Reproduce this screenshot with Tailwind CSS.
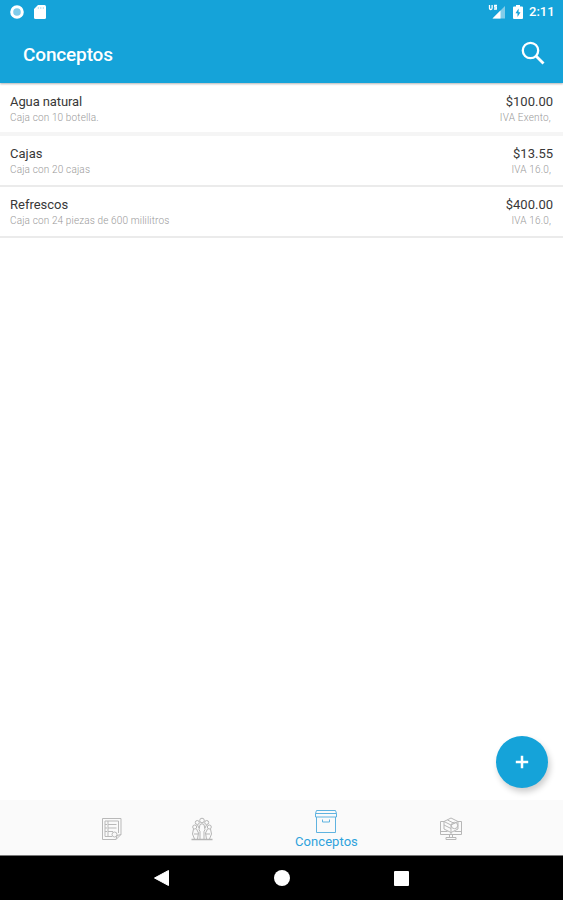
<!DOCTYPE html>
<html lang="es">
<head>
<meta charset="utf-8">
<title>Conceptos</title>
<script src="https://cdn.jsdelivr.net/npm/@tailwindcss/browser@4"></script>
</head>
<body class="bg-white">
<div class="relative flex h-[900px] w-[563px] flex-col overflow-hidden bg-white font-[Roboto,sans-serif]">
  <header class="z-10 flex h-[83px] shrink-0 flex-col bg-[#15a3d9] text-white shadow-[0_1px_2px_rgba(0,0,0,0.3)]">
    <div class="flex h-6 items-center justify-between pl-[10px] pr-[8px]">
      <div class="flex items-center gap-[10px]">
        <svg class="h-[14px] w-[14px]" viewBox="0 0 14 14"><circle cx="7" cy="7" r="5.300" fill="#7fcbea" stroke="#fff" stroke-width="3"/></svg>
        <svg class="h-[14px] w-[12px]" viewBox="0 0 12 14"><path d="M4 0h6.500Q12 0 12 1.500v11q0 1.500-1.500 1.500h-9Q0 14 0 12.500V4z" fill="#fff"/><path d="M4.300 2v2M6.800 2v2M9.300 2v2" stroke="#b5e0f1"/></svg>
      </div>
      <div class="flex items-center">
        <svg class="h-[16px] w-[18px]" viewBox="0 0 18 16"><path d="M17 2v12.500H4.500z" fill="#83cde9"/><path d="M12.500 6.500v8h-8z" fill="#fff"/><path d="M1.500 1v3q0 1.500 1.300 1.500T4.100 4V1M9 1.500H6.700v1.700h1.600V5H6" fill="none" stroke="#fff" stroke-width="1.300"/></svg>
        <svg class="ml-[7px] h-[14px] w-[10px]" viewBox="0 0 10 14"><path d="M3 0h4v1.500h2q1 0 1 1V13q0 1-1 1H1q-1 0-1-1V2.500q0-1 1-1h2z" fill="#fff"/><path d="M5.600 3.500 2.500 8.200h2V12l3-4.800h-1.900z" fill="#15a3d9"/></svg>
        <span class="ml-[6px] w-[26px] text-[13px] font-medium leading-6 whitespace-nowrap">2:11</span>
      </div>
    </div>
    <div class="flex h-[59px] items-center justify-between pl-[23px] pr-[18px]">
      <h1 class="pt-[2px] text-[19px] font-medium leading-6 tracking-[-0.15px]">Conceptos</h1>
      <svg class="mb-[2px] h-6 w-6" viewBox="0 0 24 24" fill="none" stroke="#fff" stroke-width="2.300"><circle cx="9.500" cy="9.500" r="7.700"/><path d="m15 15 7.500 7.500" stroke-width="2.800"/></svg>
    </div>
  </header>

  <main class="min-h-0 flex-1">
    <ul class="text-[#383838]">
      <li class="flex h-[53px] justify-between border-b-[4px] border-[#f5f5f5] px-[10px] pt-[11px]">
        <div><p class="text-[13px] leading-4 tracking-[-0.1px]">Agua natural</p><p class="text-[10px] font-light leading-4 tracking-[0.14px] text-[#999]">Caja con 10 botella.</p></div>
        <div class="text-right"><p class="text-[13px] leading-4">$100.00</p><p class="pr-[2px] text-[10px] font-light leading-4 tracking-[0.2px] text-[#999]">IVA Exento,</p></div>
      </li>
      <li class="flex h-[51px] justify-between border-b-2 border-[#ebebeb] px-[10px] pt-[10px]">
        <div><p class="text-[13px] leading-4">Cajas</p><p class="text-[10px] font-light leading-4 tracking-[0.16px] text-[#999]">Caja con 20 cajas</p></div>
        <div class="text-right"><p class="text-[13px] leading-4">$13.55</p><p class="pr-[2px] text-[10px] font-light leading-4 tracking-[0.15px] text-[#999]">IVA 16.0,</p></div>
      </li>
      <li class="flex h-[51px] justify-between border-b-2 border-[#ebebeb] px-[10px] pt-[10px]">
        <div><p class="text-[13px] leading-4">Refrescos</p><p class="text-[10px] font-light leading-4 tracking-[0.14px] text-[#999]">Caja con 24 piezas de 600 mililitros</p></div>
        <div class="text-right"><p class="text-[13px] leading-4">$400.00</p><p class="pr-[2px] text-[10px] font-light leading-4 tracking-[0.15px] text-[#999]">IVA 16.0,</p></div>
      </li>
    </ul>
  </main>

  <button aria-label="Agregar" class="absolute bottom-[112px] right-[15px] flex h-[52px] w-[52px] items-center justify-center rounded-full bg-[#15a3d9] shadow-[2px_4px_6px_rgba(0,0,0,0.2)]">
    <svg class="h-[14px] w-[14px]" viewBox="0 0 14 14" stroke="#fff" stroke-width="2.500"><path d="M7 .8v12.400M.8 7h12.400"/></svg>
  </button>

  <nav class="flex h-[56px] shrink-0 items-center border-b border-[#777] bg-[#fafafa] px-[67px]">
    <div class="flex w-[90px] justify-center pt-[2px]">
      <svg class="h-[24px] w-[22px]" viewBox="0 0 22 24" fill="none" stroke="#b9b9b9" stroke-width="1"><path d="M1.500 1.500h18.500v16l-5 5H1.500zM4 4h13.500v12M4 4v15.500h7M7 4v15.500M7 7.500h8.500M7 11h8.500M7 14.500h5M4 7.500h2M4 11h2M4 14.500h2M20 17.500l-4 1-1 4"/><circle cx="13.500" cy="17.500" r="2.500"/></svg>
    </div>
    <div class="flex w-[90px] justify-center pt-[2px]">
      <svg class="h-[24px] w-[24px]" viewBox="0 0 24 24" fill="none" stroke="#b5b5b5" stroke-width="1"><circle cx="12" cy="3.500" r="2.300"/><circle cx="7.300" cy="5.500" r="2"/><circle cx="16.700" cy="5.500" r="2"/><circle cx="4.700" cy="10" r="2"/><circle cx="19.300" cy="10" r="2"/><path d="M10 7.500q2-1.500 4 0l1 5-1 2v7.500M10 7.500l-1 5 1 2v7.500M3.500 12l-1 5 2 5M6.500 12l2 4-1 6M20.500 12l1 5-2 5M17.500 12l-2 4 1 6M4 17h4M16 17h4M7.500 8l1.500 3M16.500 8 15 11"/><path d="M1.500 22.500h21" stroke-width="1.500"/></svg>
    </div>
    <div class="flex w-[158px] flex-col items-center pt-[2px] text-[#2ea2dc]">
      <svg class="h-[25px] w-[24px]" viewBox="0 0 24 25" fill="none" stroke="#5fb3e0" stroke-width="1"><path d="M2.500 1.500h19l1 3v3.500h-21V4.500zM2.500 8v15.500h19V8M1.500 4.500h21M8.500 10.500v2.500h7v-2.500"/></svg>
      <span class="mt-px pl-px text-[13px] leading-[14px] tracking-[0.05px]">Conceptos</span>
    </div>
    <div class="flex w-[91px] justify-center pt-[2px]">
      <svg class="h-[24px] w-[24px]" viewBox="0 0 24 24" fill="none" stroke="#b7b7b7" stroke-width="1"><path d="M5 4.500H1.500v13h21v-13H19M1.500 14.500h7M15.500 14.500h7M10.500 17.500v3M13.500 17.500v3M7 20.500h10v2H7zM5 4.500 12 1l7 3.500v7.500L12 15.500 5 12zM5 4.500 12 8l7-3.500M12 8v9.500M8.500 3l7 3.500M5 8l7 3.500"/><circle cx="15.500" cy="8.500" r="3.200"/></svg>
    </div>
  </nav>
  <footer class="flex h-[44px] shrink-0 items-center justify-between bg-black px-[154px]">
    <svg class="h-4 w-[15px]" viewBox="0 0 15 16"><path d="M14.500.500v15L.5 8z" fill="#fff" stroke="#fff" stroke-linejoin="round"/></svg>
    <span class="h-4 w-4 rounded-full bg-white"></span>
    <span class="h-[15px] w-[15px] rounded-[1px] bg-white"></span>
  </footer>
</div>
</body>
</html>
